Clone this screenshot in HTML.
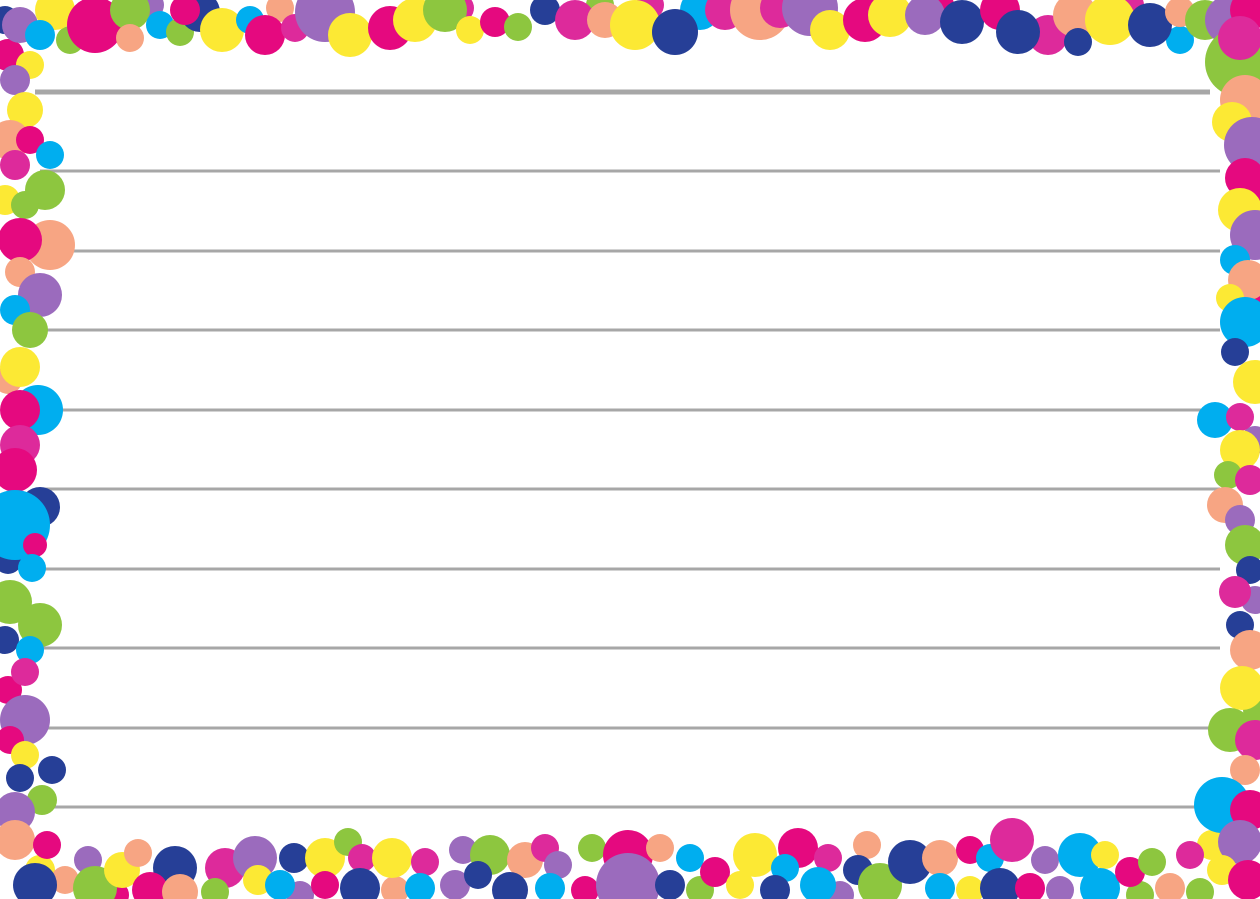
<!DOCTYPE html>
<html><head><meta charset="utf-8"><style>
html,body{margin:0;padding:0;background:#fff;overflow:hidden}
svg{display:block}
</style></head><body>
<svg width="1260" height="899" viewBox="0 0 1260 899" xmlns="http://www.w3.org/2000/svg">
<rect width="1260" height="899" fill="#fff"/>
<g stroke="#a7a7a7" stroke-width="3">
<line x1="35" y1="92" x2="1210" y2="92" stroke-width="5"/>
<line x1="40" y1="171" x2="1220" y2="171"/>
<line x1="40" y1="251" x2="1220" y2="251"/>
<line x1="40" y1="330" x2="1220" y2="330"/>
<line x1="40" y1="410" x2="1220" y2="410"/>
<line x1="40" y1="489" x2="1220" y2="489"/>
<line x1="40" y1="569" x2="1220" y2="569"/>
<line x1="40" y1="648" x2="1220" y2="648"/>
<line x1="40" y1="728" x2="1220" y2="728"/>
<line x1="40" y1="807" x2="1220" y2="807"/>
</g>
<g>
<!-- extra filler -->
<circle cx="8" cy="55" r="16" fill="#e5097f"/><circle cx="30" cy="65" r="14" fill="#fce934"/><circle cx="5" cy="20" r="14" fill="#263f97"/><circle cx="70" cy="40" r="14" fill="#8dc63f"/><circle cx="150" cy="5" r="14" fill="#9b6bbd"/><circle cx="280" cy="8" r="14" fill="#f7a583"/><circle cx="460" cy="8" r="14" fill="#dd2a9b"/><circle cx="600" cy="5" r="14" fill="#8dc63f"/><circle cx="650" cy="5" r="14" fill="#dd2a9b"/><circle cx="940" cy="5" r="14" fill="#e5097f"/><circle cx="1130" cy="5" r="14" fill="#dd2a9b"/><circle cx="1180" cy="40" r="14" fill="#00aeef"/>
<circle cx="8" cy="380" r="14" fill="#f7a583"/><circle cx="8" cy="560" r="14" fill="#263f97"/><circle cx="5" cy="640" r="14" fill="#263f97"/><circle cx="8" cy="690" r="14" fill="#e5097f"/><circle cx="40" cy="870" r="15" fill="#fce934"/><circle cx="65" cy="880" r="14" fill="#f7a583"/>
<circle cx="1258" cy="200" r="15" fill="#e5097f"/><circle cx="1255" cy="300" r="14" fill="#e5097f"/><circle cx="1255" cy="440" r="14" fill="#9b6bbd"/><circle cx="1255" cy="600" r="14" fill="#9b6bbd"/><circle cx="1258" cy="710" r="15" fill="#8dc63f"/><circle cx="1212" cy="845" r="15" fill="#fce934"/>
<circle cx="115" cy="895" r="14" fill="#e5097f"/><circle cx="300" cy="895" r="14" fill="#9b6bbd"/><circle cx="395" cy="890" r="14" fill="#f7a583"/><circle cx="585" cy="890" r="14" fill="#e5097f"/><circle cx="700" cy="890" r="14" fill="#8dc63f"/><circle cx="840" cy="895" r="14" fill="#9b6bbd"/><circle cx="970" cy="890" r="14" fill="#fce934"/><circle cx="1060" cy="890" r="14" fill="#9b6bbd"/><circle cx="1140" cy="895" r="14" fill="#8dc63f"/>
<!-- top -->
<circle cx="20" cy="25" r="18" fill="#9b6bbd"/><circle cx="55" cy="10" r="20" fill="#fce934"/><circle cx="40" cy="35" r="15" fill="#00aeef"/><circle cx="95" cy="25" r="28" fill="#e5097f"/><circle cx="130" cy="10" r="20" fill="#8dc63f"/><circle cx="130" cy="38" r="14" fill="#f7a583"/><circle cx="160" cy="25" r="14" fill="#00aeef"/><circle cx="180" cy="32" r="14" fill="#8dc63f"/><circle cx="200" cy="12" r="20" fill="#263f97"/><circle cx="185" cy="10" r="15" fill="#e5097f"/><circle cx="222" cy="30" r="22" fill="#fce934"/><circle cx="250" cy="20" r="14" fill="#00aeef"/><circle cx="265" cy="35" r="20" fill="#e5097f"/><circle cx="295" cy="28" r="14" fill="#dd2a9b"/><circle cx="325" cy="12" r="30" fill="#9b6bbd"/><circle cx="350" cy="35" r="22" fill="#fce934"/><circle cx="390" cy="28" r="22" fill="#e5097f"/><circle cx="415" cy="20" r="22" fill="#fce934"/><circle cx="445" cy="10" r="22" fill="#8dc63f"/><circle cx="470" cy="30" r="14" fill="#fce934"/><circle cx="495" cy="22" r="15" fill="#e5097f"/><circle cx="518" cy="27" r="14" fill="#8dc63f"/><circle cx="545" cy="10" r="15" fill="#263f97"/><circle cx="575" cy="20" r="20" fill="#dd2a9b"/><circle cx="605" cy="20" r="18" fill="#f7a583"/><circle cx="635" cy="25" r="25" fill="#fce934"/><circle cx="700" cy="10" r="20" fill="#00aeef"/><circle cx="675" cy="32" r="23" fill="#263f97"/><circle cx="725" cy="10" r="20" fill="#dd2a9b"/><circle cx="760" cy="10" r="30" fill="#f7a583"/><circle cx="780" cy="8" r="20" fill="#dd2a9b"/><circle cx="810" cy="8" r="28" fill="#9b6bbd"/><circle cx="830" cy="30" r="20" fill="#fce934"/><circle cx="865" cy="20" r="22" fill="#e5097f"/><circle cx="890" cy="15" r="22" fill="#fce934"/><circle cx="925" cy="15" r="20" fill="#9b6bbd"/><circle cx="962" cy="22" r="22" fill="#263f97"/><circle cx="1000" cy="10" r="20" fill="#e5097f"/><circle cx="1048" cy="35" r="20" fill="#dd2a9b"/><circle cx="1018" cy="32" r="22" fill="#263f97"/><circle cx="1075" cy="15" r="22" fill="#f7a583"/><circle cx="1078" cy="42" r="14" fill="#263f97"/><circle cx="1110" cy="20" r="25" fill="#fce934"/><circle cx="1150" cy="25" r="22" fill="#263f97"/><circle cx="1180" cy="12" r="15" fill="#f7a583"/><circle cx="1205" cy="20" r="20" fill="#8dc63f"/><circle cx="1230" cy="20" r="25" fill="#9b6bbd"/><circle cx="1250" cy="10" r="20" fill="#e5097f"/>
<!-- right -->
<circle cx="1240" cy="62" r="35" fill="#8dc63f"/><circle cx="1240" cy="38" r="22" fill="#dd2a9b"/><circle cx="1245" cy="100" r="25" fill="#f7a583"/><circle cx="1232" cy="122" r="20" fill="#fce934"/><circle cx="1252" cy="145" r="28" fill="#9b6bbd"/><circle cx="1245" cy="178" r="20" fill="#e5097f"/><circle cx="1240" cy="210" r="22" fill="#fce934"/><circle cx="1255" cy="235" r="25" fill="#9b6bbd"/><circle cx="1235" cy="260" r="15" fill="#00aeef"/><circle cx="1248" cy="280" r="20" fill="#f7a583"/><circle cx="1230" cy="298" r="14" fill="#fce934"/><circle cx="1245" cy="322" r="25" fill="#00aeef"/><circle cx="1235" cy="352" r="14" fill="#263f97"/><circle cx="1255" cy="382" r="22" fill="#fce934"/><circle cx="1215" cy="420" r="18" fill="#00aeef"/><circle cx="1240" cy="417" r="14" fill="#dd2a9b"/><circle cx="1240" cy="450" r="20" fill="#fce934"/><circle cx="1228" cy="475" r="14" fill="#8dc63f"/><circle cx="1250" cy="480" r="15" fill="#dd2a9b"/><circle cx="1225" cy="505" r="18" fill="#f7a583"/><circle cx="1240" cy="520" r="15" fill="#9b6bbd"/><circle cx="1245" cy="545" r="20" fill="#8dc63f"/><circle cx="1250" cy="570" r="14" fill="#263f97"/><circle cx="1235" cy="592" r="16" fill="#dd2a9b"/><circle cx="1240" cy="625" r="14" fill="#263f97"/><circle cx="1250" cy="650" r="20" fill="#f7a583"/><circle cx="1242" cy="688" r="22" fill="#fce934"/><circle cx="1230" cy="730" r="22" fill="#8dc63f"/><circle cx="1255" cy="740" r="20" fill="#dd2a9b"/><circle cx="1245" cy="770" r="15" fill="#f7a583"/><circle cx="1222" cy="805" r="28" fill="#00aeef"/><circle cx="1250" cy="810" r="20" fill="#e5097f"/><circle cx="1240" cy="842" r="22" fill="#9b6bbd"/>
<!-- left -->
<circle cx="15" cy="80" r="15" fill="#9b6bbd"/><circle cx="25" cy="110" r="18" fill="#fce934"/><circle cx="10" cy="140" r="20" fill="#f7a583"/><circle cx="30" cy="140" r="14" fill="#e5097f"/><circle cx="15" cy="165" r="15" fill="#dd2a9b"/><circle cx="50" cy="155" r="14" fill="#00aeef"/><circle cx="45" cy="190" r="20" fill="#8dc63f"/><circle cx="5" cy="200" r="15" fill="#fce934"/><circle cx="25" cy="205" r="14" fill="#8dc63f"/><circle cx="50" cy="245" r="25" fill="#f7a583"/><circle cx="20" cy="240" r="22" fill="#e5097f"/><circle cx="20" cy="272" r="15" fill="#f7a583"/><circle cx="40" cy="295" r="22" fill="#9b6bbd"/><circle cx="15" cy="310" r="15" fill="#00aeef"/><circle cx="30" cy="330" r="18" fill="#8dc63f"/><circle cx="20" cy="367" r="20" fill="#fce934"/><circle cx="38" cy="410" r="25" fill="#00aeef"/><circle cx="20" cy="410" r="20" fill="#e5097f"/><circle cx="20" cy="445" r="20" fill="#dd2a9b"/><circle cx="15" cy="470" r="22" fill="#e5097f"/><circle cx="40" cy="507" r="20" fill="#263f97"/><circle cx="15" cy="525" r="35" fill="#00aeef"/><circle cx="35" cy="545" r="12" fill="#e5097f"/><circle cx="32" cy="568" r="14" fill="#00aeef"/><circle cx="10" cy="602" r="22" fill="#8dc63f"/><circle cx="40" cy="625" r="22" fill="#8dc63f"/><circle cx="30" cy="650" r="14" fill="#00aeef"/><circle cx="25" cy="672" r="14" fill="#dd2a9b"/><circle cx="25" cy="720" r="25" fill="#9b6bbd"/><circle cx="10" cy="740" r="14" fill="#e5097f"/><circle cx="25" cy="755" r="14" fill="#fce934"/><circle cx="52" cy="770" r="14" fill="#263f97"/><circle cx="20" cy="778" r="14" fill="#263f97"/><circle cx="42" cy="800" r="15" fill="#8dc63f"/><circle cx="15" cy="812" r="20" fill="#9b6bbd"/><circle cx="15" cy="840" r="20" fill="#f7a583"/><circle cx="47" cy="845" r="14" fill="#e5097f"/>
<!-- bottom -->
<circle cx="35" cy="885" r="22" fill="#263f97"/><circle cx="88" cy="860" r="14" fill="#9b6bbd"/><circle cx="95" cy="888" r="22" fill="#8dc63f"/><circle cx="122" cy="870" r="18" fill="#fce934"/><circle cx="138" cy="853" r="14" fill="#f7a583"/><circle cx="175" cy="868" r="22" fill="#263f97"/><circle cx="150" cy="890" r="18" fill="#e5097f"/><circle cx="180" cy="892" r="18" fill="#f7a583"/><circle cx="225" cy="868" r="20" fill="#dd2a9b"/><circle cx="255" cy="858" r="22" fill="#9b6bbd"/><circle cx="258" cy="880" r="15" fill="#fce934"/><circle cx="215" cy="892" r="14" fill="#8dc63f"/><circle cx="294" cy="858" r="15" fill="#263f97"/><circle cx="280" cy="885" r="15" fill="#00aeef"/><circle cx="325" cy="858" r="20" fill="#fce934"/><circle cx="348" cy="842" r="14" fill="#8dc63f"/><circle cx="325" cy="885" r="14" fill="#e5097f"/><circle cx="362" cy="858" r="14" fill="#dd2a9b"/><circle cx="360" cy="888" r="20" fill="#263f97"/><circle cx="392" cy="858" r="20" fill="#fce934"/><circle cx="425" cy="862" r="14" fill="#dd2a9b"/><circle cx="420" cy="888" r="15" fill="#00aeef"/><circle cx="463" cy="850" r="14" fill="#9b6bbd"/><circle cx="455" cy="885" r="15" fill="#9b6bbd"/><circle cx="490" cy="855" r="20" fill="#8dc63f"/><circle cx="478" cy="875" r="14" fill="#263f97"/><circle cx="525" cy="860" r="18" fill="#f7a583"/><circle cx="510" cy="890" r="18" fill="#263f97"/><circle cx="545" cy="848" r="14" fill="#dd2a9b"/><circle cx="558" cy="865" r="14" fill="#9b6bbd"/><circle cx="550" cy="888" r="15" fill="#00aeef"/><circle cx="592" cy="848" r="14" fill="#8dc63f"/><circle cx="628" cy="855" r="25" fill="#e5097f"/><circle cx="660" cy="848" r="14" fill="#f7a583"/><circle cx="628" cy="885" r="32" fill="#9b6bbd"/><circle cx="690" cy="858" r="14" fill="#00aeef"/><circle cx="670" cy="885" r="15" fill="#263f97"/><circle cx="715" cy="872" r="15" fill="#e5097f"/><circle cx="755" cy="855" r="22" fill="#fce934"/><circle cx="740" cy="885" r="14" fill="#fce934"/><circle cx="798" cy="848" r="20" fill="#e5097f"/><circle cx="785" cy="868" r="14" fill="#00aeef"/><circle cx="775" cy="890" r="15" fill="#263f97"/><circle cx="828" cy="858" r="14" fill="#dd2a9b"/><circle cx="818" cy="885" r="18" fill="#00aeef"/><circle cx="867" cy="845" r="14" fill="#f7a583"/><circle cx="858" cy="870" r="15" fill="#263f97"/><circle cx="880" cy="885" r="22" fill="#8dc63f"/><circle cx="910" cy="862" r="22" fill="#263f97"/><circle cx="940" cy="858" r="18" fill="#f7a583"/><circle cx="940" cy="888" r="15" fill="#00aeef"/><circle cx="970" cy="850" r="14" fill="#e5097f"/><circle cx="990" cy="858" r="14" fill="#00aeef"/><circle cx="1012" cy="840" r="22" fill="#dd2a9b"/><circle cx="1000" cy="888" r="20" fill="#263f97"/><circle cx="1045" cy="860" r="14" fill="#9b6bbd"/><circle cx="1030" cy="888" r="15" fill="#e5097f"/><circle cx="1080" cy="855" r="22" fill="#00aeef"/><circle cx="1105" cy="855" r="14" fill="#fce934"/><circle cx="1100" cy="888" r="20" fill="#00aeef"/><circle cx="1130" cy="872" r="15" fill="#e5097f"/><circle cx="1152" cy="862" r="14" fill="#8dc63f"/><circle cx="1190" cy="855" r="14" fill="#dd2a9b"/><circle cx="1170" cy="888" r="15" fill="#f7a583"/><circle cx="1222" cy="870" r="15" fill="#fce934"/><circle cx="1248" cy="880" r="20" fill="#e5097f"/><circle cx="1200" cy="892" r="14" fill="#8dc63f"/>
</g>
</svg>
</body></html>
